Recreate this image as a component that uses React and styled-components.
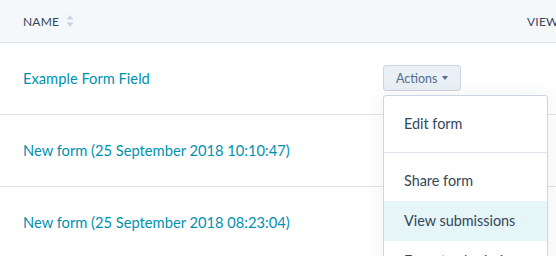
import React from "react";
import styled, { createGlobalStyle } from "styled-components";

const Global = createGlobalStyle`
  body {
    margin: 0;
    background: #fff;
    font-family: 'Lato', 'Liberation Sans', sans-serif;
    color: #33475b;
    -webkit-font-smoothing: antialiased;
  }
`;

const Page = styled.div`
  width: 556px;
  height: 256px;
  overflow: hidden;
`;

const Head = styled.div`
  display: grid;
  grid-template-columns: 383px 144px 1fr;
  align-items: center;
  height: 42px;
  background: #f5f8fa;
  border-bottom: 1px solid #dfe3eb;
`;

const HeadCell = styled.div`
  display: flex;
  align-items: center;
  gap: 7px;
  padding-left: ${p => (p.first ? "23px" : "0")};
  font-size: 12px;
  letter-spacing: 0.2px;
  text-transform: uppercase;
  color: #33475b;
  white-space: nowrap;
`;

const Row = styled.div`
  display: grid;
  grid-template-columns: 383px 1fr;
  align-items: center;
  height: 71px;
  border-bottom: 1px solid #dfe3eb;
`;

const NameLink = styled.a`
  padding-left: 23px;
  padding-bottom: 2px;
  font-size: 14.7px;
  color: #0091ae;
  text-decoration: none;
  white-space: nowrap;
`;

const ActionsWrap = styled.div`
  position: relative;
  align-self: start;
  margin-top: 22px;
`;

const ActionsButton = styled.button`
  display: flex;
  align-items: center;
  gap: 5px;
  box-sizing: border-box;
  width: 78px;
  height: 26px;
  padding: 0 12px;
  border: 1px solid #cbd6e2;
  border-radius: 3px;
  background: #eaf0f6;
  font-family: inherit;
  font-size: 12.5px;
  color: #516f90;
`;

const Caret = styled.span`
  width: 0;
  height: 0;
  border-left: 3.5px solid transparent;
  border-right: 3.5px solid transparent;
  border-top: 4px solid #516f90;
`;

const Menu = styled.ul`
  position: absolute;
  top: 30px;
  left: 0;
  z-index: 2;
  box-sizing: border-box;
  width: 165px;
  margin: 0;
  padding: 8px 0;
  list-style: none;
  background: #fff;
  border: 1px solid #cbd6e2;
  border-radius: 3px;
  box-shadow: 0 1px 24px rgba(45, 62, 80, 0.08);
`;

const Item = styled.li`
  height: 40px;
  line-height: 40px;
  padding-left: 20px;
  font-size: 14.4px;
  color: #33475b;
  white-space: nowrap;
  background: ${p => (p.active ? "#e5f5f8" : "transparent")};
`;

const Divider = styled.li`
  height: 1px;
  margin: 8px 0;
  background: #dfe3eb;
`;

function SortIcon() {
  return (
    <svg width="8" height="14" viewBox="0 0 8 14">
      <path d="M4 1 L7.5 5.5 H0.5 Z" fill="#cbd6e2" />
      <path d="M4 13 L7.5 8.5 H0.5 Z" fill="#cbd6e2" />
    </svg>
  );
}

const forms = [
  "Example Form Field",
  "New form (25 September 2018 10:10:47)",
  "New form (25 September 2018 08:23:04)",
];

export default function App() {
  return (
    <Page>
      <Global />
      <Head>
        <HeadCell first>
          Name <SortIcon />
        </HeadCell>
        <HeadCell />
        <HeadCell>Views</HeadCell>
      </Head>
      {forms.map((name, i) => (
        <Row key={name}>
          <NameLink href="#">{name}</NameLink>
          {i === 0 && (
            <ActionsWrap>
              <ActionsButton>
                Actions <Caret />
              </ActionsButton>
              <Menu>
                <Item>Edit form</Item>
                <Divider />
                <Item>Share form</Item>
                <Item active>View submissions</Item>
                <Item>Export submissions</Item>
              </Menu>
            </ActionsWrap>
          )}
        </Row>
      ))}
    </Page>
  );
}
